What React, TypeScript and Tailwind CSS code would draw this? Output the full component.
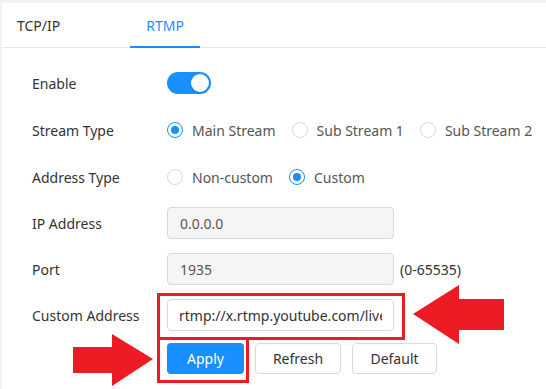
import { useState } from 'react';

function Radio({ checked, label }: { checked?: boolean; label: string }) {
  return (
    <label className="flex items-center gap-[9px] text-[14px] text-[#555]">
      <span
        className={
          'w-4 h-4 rounded-full border flex items-center justify-center bg-white ' +
          (checked ? 'border-[#1890ff]' : 'border-[#d9d9d9]')
        }
      >
        {checked && <span className="w-2 h-2 rounded-full bg-[#1890ff]" />}
      </span>
      {label}
    </label>
  );
}

function Row({ label, children, className }: { label: string; children: React.ReactNode; className?: string }) {
  return (
    <div className={'flex items-center h-8 ' + (className ?? '')}>
      <div className="w-[135px] text-[14px] text-[#333]">{label}</div>
      {children}
    </div>
  );
}

export default function App() {
  const [tab, setTab] = useState<'tcp' | 'rtmp'>('rtmp');

  return (
    <div
      className="relative w-[546px] h-[389px] overflow-hidden bg-[#f0f2f5] pt-[3px] pl-[2px]"
      style={{ fontFamily: '"Noto Sans", "Open Sans", sans-serif' }}
    >
      <div className="bg-white h-full">
        {/* tabs */}
        <div className="flex h-[45px] border-b border-[#e8e8e8] text-[14px] pt-[1px]">
          <button
            onClick={() => setTab('tcp')}
            className={'relative px-[15px] ' + (tab === 'tcp' ? 'text-[#1890ff]' : 'text-[#333]')}
          >
            TCP/IP
          </button>
          <button
            onClick={() => setTab('rtmp')}
            className={'relative ml-[55px] px-4 ' + (tab === 'rtmp' ? 'text-[#1890ff]' : 'text-[#333]')}
          >
            RTMP
            {tab === 'rtmp' && <span className="absolute left-0 right-0 bottom-[-1px] h-[2px] bg-[#1890ff]" />}
          </button>
        </div>

        <div className="pl-[30px] pt-[19px] flex flex-col">
          <Row label="Enable">
            <span className="w-[44px] h-[22px] rounded-full bg-[#1890ff] flex items-center justify-end pr-[2px]">
              <span className="w-[18px] h-[18px] rounded-full bg-white shadow-sm" />
            </span>
          </Row>

          <Row label="Stream Type" className="mt-[15px]">
            <div className="flex items-center gap-[16px]">
              <Radio checked label="Main Stream" />
              <Radio label="Sub Stream 1" />
              <Radio label="Sub Stream 2" />
            </div>
          </Row>

          <Row label="Address Type" className="mt-[15px]">
            <div className="flex items-center gap-[16px]">
              <Radio label="Non-custom" />
              <Radio checked label="Custom" />
            </div>
          </Row>

          <Row label="IP Address" className="mt-[14px]">
            <input
              readOnly
              value="0.0.0.0"
              className="w-[227px] h-8 border border-[#d9d9d9] rounded bg-[#f5f5f5] px-3 text-[14px] text-[#555] outline-none"
            />
          </Row>

          <Row label="Port" className="mt-[14px]">
            <input
              readOnly
              value="1935"
              className="w-[227px] h-8 border border-[#d9d9d9] rounded bg-[#f5f5f5] px-3 text-[14px] text-[#555] outline-none"
            />
            <span className="ml-[6px] text-[14px] text-[#333]">(0-65535)</span>
          </Row>

          <Row label="Custom Address" className="mt-[14px]">
            <input
              readOnly
              value="rtmp://x.rtmp.youtube.com/live2/xxxx-xxxx-xxxx"
              className="w-[227px] h-8 border border-[#d9d9d9] rounded bg-white px-[11px] text-[14px] text-[#333] outline-none"
            />
          </Row>

          <div className="flex items-center gap-[11px] mt-[12px] pl-[135px] text-[14px]">
            <button className="w-[77px] h-[31px] rounded bg-[#1890ff] text-white">Apply</button>
            <button className="w-[86px] h-[31px] rounded border border-[#d9d9d9] bg-white text-[#333]">Refresh</button>
            <button className="w-[85px] h-[31px] rounded border border-[#d9d9d9] bg-white text-[#333]">Default</button>
          </div>
        </div>
      </div>

      {/* annotations */}
      <div className="absolute left-[157px] top-[293px] w-[248px] h-[47px] border-[3px] border-[#ed1c24]" />
      <div className="absolute left-[157px] top-[337px] w-[92px] h-[46px] border-[3px] border-[#ed1c24]" />
      <svg className="absolute left-0 top-0" width="546" height="389" viewBox="0 0 546 389">
        <polygon points="73,347 112,347 112,334 153,359 112,386 112,373 73,373" fill="#ed1c24" />
        <polygon points="504,299 459,299 459,285 413,314 459,344 459,330 504,330" fill="#ed1c24" />
      </svg>
    </div>
  );
}
